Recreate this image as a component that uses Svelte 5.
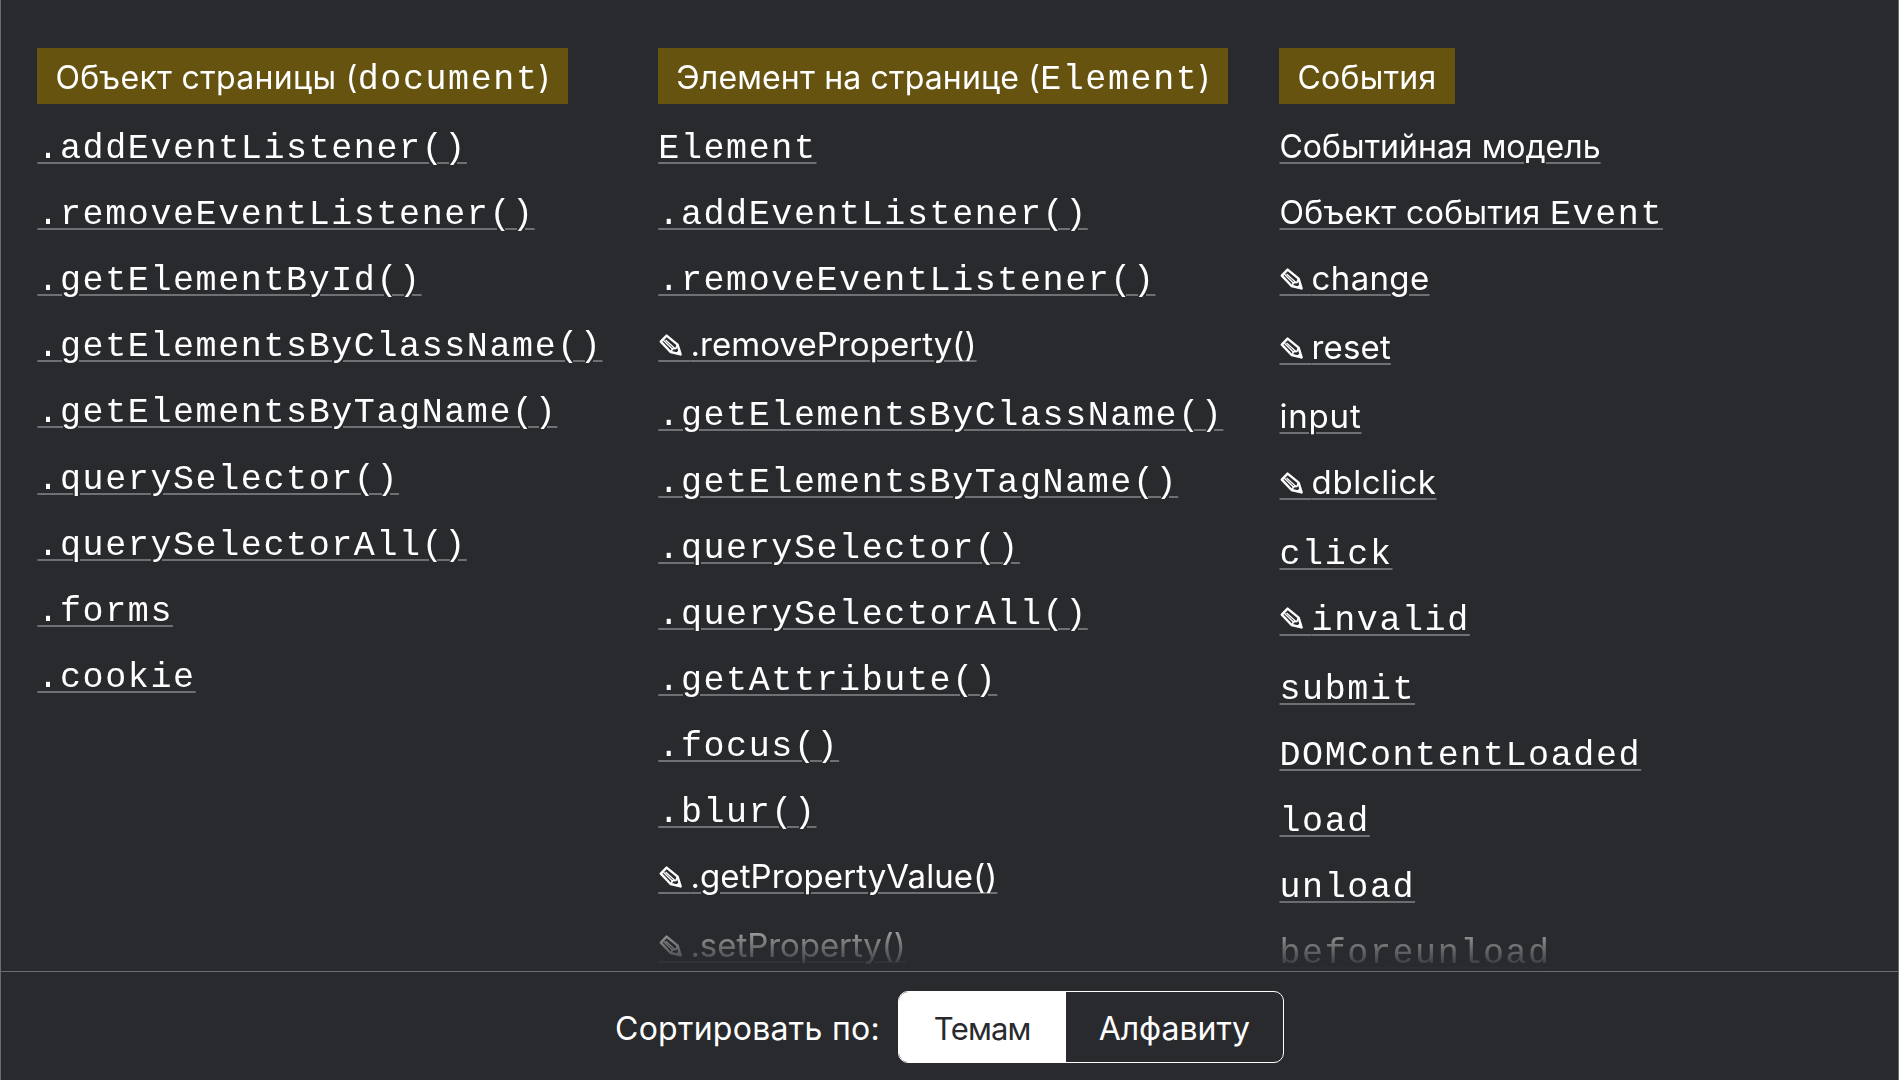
<script>
  // kind: 'code' is set in the monospaced face, 'latin' and 'text' in the sans face.
  // ls is the tracking of a label in pixels, draft marks an unfinished article.
  const code = (t, draft = false) => ({ draft, parts: [{ t, kind: 'code' }] });
  const latin = (t, ls, draft = false) => ({ draft, parts: [{ t, kind: 'latin', ls }] });
  const text = (t, ls) => ({ draft: false, parts: [{ t, kind: 'text', ls }] });

  const groups = [
    {
      title: [
        { t: 'Объект страницы (', kind: 'text', ls: 0.33 },
        { t: 'document', kind: 'code' },
        { t: ')', kind: 'text', ls: 0 }
      ],
      items: [
        code('.addEventListener()'),
        code('.removeEventListener()'),
        code('.getElementById()'),
        code('.getElementsByClassName()'),
        code('.getElementsByTagName()'),
        code('.querySelector()'),
        code('.querySelectorAll()'),
        code('.forms'),
        code('.cookie')
      ]
    },
    {
      title: [
        { t: 'Элемент на странице (', kind: 'text', ls: 0.17 },
        { t: 'Element', kind: 'code' },
        { t: ')', kind: 'text', ls: 0 }
      ],
      items: [
        code('Element'),
        code('.addEventListener()'),
        code('.removeEventListener()'),
        latin('.removeProperty()', 0.07, true),
        code('.getElementsByClassName()'),
        code('.getElementsByTagName()'),
        code('.querySelector()'),
        code('.querySelectorAll()'),
        code('.getAttribute()'),
        code('.focus()'),
        code('.blur()'),
        latin('.getPropertyValue()', 0.09, true),
        latin('.setProperty()', -0.05, true)
      ]
    },
    {
      title: [{ t: 'События', kind: 'text', ls: 0.27 }],
      items: [
        text('Событийная модель', 0.02),
        {
          draft: false,
          parts: [
            { t: 'Объект события ', kind: 'text', ls: 0.37 },
            { t: 'Event', kind: 'code' }
          ]
        },
        latin('change', 0.35, true),
        latin('reset', 0.14, true),
        latin('input', 0.8),
        latin('dblclick', 0.6, true),
        code('click'),
        code('invalid', true),
        code('submit'),
        code('DOMContentLoaded'),
        code('load'),
        code('unload'),
        code('beforeunload')
      ]
    }
  ];

  let sort = $state('topic');
</script>

{#snippet run(parts)}{#each parts as p}<span class={p.kind} style:letter-spacing={p.ls === undefined ? null : `${p.ls}px`}>{p.t}</span>{/each}{/snippet}

<div class="page">
  <main class="groups">
    {#each groups as group}
      <section class="group">
        <h2 class="title">{@render run(group.title)}</h2>
        <ul class="list">
          {#each group.items as item}
            <li class="item" class:draft={item.draft}>
              <a class="link" href="#article">{#if item.draft}<svg class="pencil" viewBox="0 0 23 22" width="23" height="22" fill="none" stroke="currentColor" stroke-linejoin="round">
                    <path d="M1.8 7.6 7.6 1.6 18.6 10.6 21.6 20.4 11.6 18Z" stroke-width="2.4" />
                    <path d="M4.4 6.2 13.6 15.2M6.6 6 15.6 14.2" stroke-width="1.3" />
                    <path d="M11.6 18 13.8 14.6 17 14.4 18.6 10.6" stroke-width="1.6" />
                    <path d="M16.8 19.4 22 21.2 20.4 15.8Z" fill="currentColor" stroke-width="0.6" />
                  </svg><span class="gap">&nbsp;</span>{/if}{@render run(item.parts)}</a>
            </li>
          {/each}
        </ul>
      </section>
    {/each}
  </main>
  <footer class="bar">
    <span class="label">Сортировать по:</span>
    <div class="switch">
      <button class="option topics" class:active={sort === 'topic'} onclick={() => (sort = 'topic')}>Темам</button>
      <button class="option letters" class:active={sort === 'alpha'} onclick={() => (sort = 'alpha')}>Алфавиту</button>
    </div>
  </footer>
</div>

<style>
  :global(body) {
    background: #292a2e;
  }
  .page {
    box-sizing: border-box;
    width: 1899px;
    height: 1080px;
    overflow: hidden;
    display: flex;
    flex-direction: column;
    border: solid #6b6c6f;
    border-width: 0 1px;
    color: #fff;
    font: 32px/56px Inter, 'Liberation Sans', sans-serif;
    font-weight: 430;
  }
  .groups {
    flex: none;
    height: 971px;
    box-sizing: border-box;
    padding: 48px 0 0 36.4px;
    display: grid;
    grid-template-columns: 620.9px 621.2px 1fr;
    align-items: start;
    mask-image: linear-gradient(#000 898px, transparent 971px);
  }
  .title {
    margin: 0;
    width: max-content;
    box-sizing: border-box;
    height: 56px;
    padding: 0 18px;
    background: #65530f;
    font-size: 32px;
    font-weight: 430;
    line-height: 60px;
    white-space: pre;
  }
  .list {
    list-style: none;
    margin: 0;
    padding: 14.85px 0 0;
  }
  .item {
    display: flex;
    height: 66.15px;
    white-space: pre;
    line-height: 56px;
  }
  .item.draft {
    height: 69.1px;
  }
  .code {
    font-family: 'Liberation Mono', monospace;
    font-size: 35px;
    font-weight: 400;
    line-height: 0;
    letter-spacing: 1.6px;
  }
  .latin {
    font-size: 33px;
    line-height: 0;
  }
  .link {
    position: relative;
    color: inherit;
    text-decoration: underline 2px #6f7073;
    text-underline-offset: 4px;
  }
  .pencil {
    position: absolute;
    left: 0.5px;
    top: 16.5px;
  }
  /* Underlined blank that keeps room for the pencil drawn over it. */
  .gap {
    font-family: 'Liberation Mono', monospace;
    line-height: 0;
    letter-spacing: 12.9px;
  }
  .bar {
    flex: 1;
    border-top: 1px solid #6b6c6f;
    display: flex;
    justify-content: center;
    align-items: flex-start;
    gap: 18px;
    padding: 19px 0 0;
  }
  .label {
    line-height: 75px;
    letter-spacing: 0.28px;
  }
  .switch {
    box-sizing: border-box;
    display: flex;
    width: 386px;
    height: 72px;
    border: 1px solid #fff;
    border-radius: 10px;
    overflow: hidden;
  }
  .option {
    appearance: none;
    border: 0;
    margin: 0;
    padding: 2px 0 0;
    background: none;
    color: #fff;
    font: inherit;
    line-height: 70px;
  }
  .topics {
    width: 166.5px;
    font-size: 31px;
    letter-spacing: -0.8px;
  }
  .letters {
    flex: 1;
  }
  .option.active {
    background: #fff;
    color: #292a2e;
  }
</style>
